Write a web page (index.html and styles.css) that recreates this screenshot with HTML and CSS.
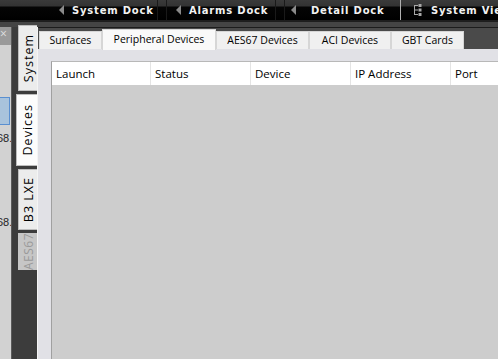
FILE: index.html
```html
<!DOCTYPE html>
<html lang="en">
<head>
    <meta charset="UTF-8">
    <meta name="viewport" content="width=device-width, initial-scale=1.0">
    <title>Peripheral Devices</title>
    <link rel="stylesheet" href="styles.css">
</head>
<body>
    <div class="topbar">
        <div class="dock-spacer"></div>
        <div class="dock-btn dock-system"><span class="arrow"></span>System Dock</div>
        <div class="dock-sep"></div>
        <div class="dock-btn dock-alarms"><span class="arrow"></span>Alarms Dock</div>
        <div class="dock-sep"></div>
        <div class="dock-btn dock-detail"><span class="arrow"></span>Detail Dock</div>
        <div class="dock-sep light"></div>
        <div class="dock-btn dock-view">
            <svg class="tree-icon" width="10" height="12" viewBox="0 0 10 12">
                <path d="M1.5 1 V11 M1.5 1.5 H5 M1.5 6 H5 M1.5 10.5 H5" stroke="#a8a8a8" stroke-width="1" fill="none"/>
                <rect x="5.5" y="0" width="3" height="3" fill="#a8a8a8"/>
                <rect x="5.5" y="4.5" width="3" height="3" fill="#a8a8a8"/>
                <rect x="5.5" y="9" width="3" height="3" fill="#a8a8a8"/>
            </svg>
            System View
        </div>
    </div>
    <div class="topgap"></div>

    <div class="main">
        <div class="side">
            <div class="side-head">×</div>
            <div class="side-item selected"></div>
            <div class="side-text first">68.</div>
            <div class="side-text second">68.</div>
        </div>

        <div class="vtabs">
            <div class="vtab system"><span>System</span></div>
            <div class="vtab devices active"><span>Devices</span></div>
            <div class="vtab b3"><span>B3 LXE</span></div>
            <div class="vtab aes disabled"><span>AES67</span></div>
        </div>

        <div class="content">
            <div class="tabstrip">
                <div class="tab t-surfaces">Surfaces</div>
                <div class="tab t-periph active">Peripheral Devices</div>
                <div class="tab t-aes">AES67 Devices</div>
                <div class="tab t-aci">ACI Devices</div>
                <div class="tab t-gbt">GBT Cards</div>
            </div>
            <div class="page">
                <div class="grid">
                    <div class="grid-head">
                        <div class="col c-launch">Launch</div>
                        <div class="col c-status">Status</div>
                        <div class="col c-device">Device</div>
                        <div class="col c-ip">IP Address</div>
                        <div class="col c-port">Port</div>
                    </div>
                    <div class="grid-body"></div>
                </div>
            </div>
        </div>
    </div>
</body>
</html>
```

FILE: styles.css
```css
body {
    margin: 0;
    padding: 0;
    width: 498px;
    height: 359px;
    overflow: hidden;
    background-color: #444;
    font-family: "Open Sans", "Noto Sans", sans-serif;
}

/* top dock toolbar */
.topbar {
    height: 20px;
    display: flex;
    background: linear-gradient(to bottom, #3a3a3a 0, #333 6px, #050505 7px, #000 100%);
    border-bottom: 2px solid #1e1e1e;
}

.dock-spacer {
    width: 50px;
    flex: none;
}

.dock-btn {
    display: flex;
    align-items: center;
    flex: none;
    padding-left: 9px;
    box-sizing: border-box;
    color: #f2f2f2;
    font-family: "DejaVu Sans", sans-serif;
    font-weight: bold;
    font-size: 10px;
    letter-spacing: 0.8px;
    white-space: nowrap;
}

.dock-btn .arrow {
    width: 0;
    height: 0;
    border-top: 5px solid transparent;
    border-bottom: 5px solid transparent;
    border-right: 5px solid #8a8a8a;
    margin-right: 8px;
}

.dock-system { width: 107px; }
.dock-alarms { width: 108px; }
.dock-detail { width: 113px; padding-left: 6px; }
.dock-detail .arrow { margin-right: 15px; }
.dock-view { padding-left: 8px; }

.tree-icon {
    margin-right: 8px;
}

.dock-sep {
    width: 10px;
    flex: none;
    background: linear-gradient(to right, #1a1a1a 0, #1a1a1a 1px, transparent 1px, transparent 9px, #1a1a1a 9px);
}

.dock-sep.light {
    width: 7px;
    background: linear-gradient(to right, transparent 2px, #b0b0b0 2px, #b0b0b0 3px, transparent 3px);
}

.topgap {
    height: 5px;
    background-color: #454545;
}

/* main area */
.main {
    display: flex;
    height: 332px;
}

.side {
    width: 11px;
    flex: none;
    background-color: #d2d2d2;
    border-right: 1px solid #5a5a5a;
    display: flex;
    flex-direction: column;
    overflow: hidden;
}

.side-head {
    height: 18px;
    background-color: #9a9a9a;
    color: #e0e0e0;
    font-size: 12px;
    line-height: 14px;
    text-indent: 0;
}

.side-item.selected {
    margin-top: 52px;
    height: 26px;
    background-color: #a9c3dc;
    border: 1px solid #5a8fd0;
    border-left: none;
    width: 9px;
}

.side-text {
    font-family: "Liberation Sans", sans-serif;
    font-size: 11px;
    color: #222;
    text-indent: -3px;
    white-space: nowrap;
}

.side-text.first { margin-top: 7px; }
.side-text.second { margin-top: 72px; }

/* vertical tabs */
.vtabs {
    width: 25px;
    flex: none;
    background-color: #3c3c3c;
    display: flex;
    flex-direction: column;
    align-items: flex-end;
    gap: 3px;
    border-right: 1px solid #f4f4f4;
}

.vtab {
    width: 19px;
    background-color: #ececec;
    border: 1px solid #bdbdbd;
    border-right: none;
    box-sizing: border-box;
    display: flex;
    align-items: center;
    justify-content: center;
    font-size: 12.5px;
    color: #000;
}

.vtab span {
    writing-mode: vertical-rl;
    transform: rotate(180deg);
    white-space: nowrap;
    letter-spacing: 1px;
}

.vtab.system { height: 66px; margin-top: -2px; }
.vtab.devices { height: 72px; }
.vtab.b3 { height: 61px; }
.vtab.aes { height: 37px; font-size: 12px; letter-spacing: 0; }
.vtab.aes span { letter-spacing: 0.5px; }

.vtab.active {
    width: 21px;
    background-color: #fcfcfc;
}

.vtab.disabled {
    background-color: #c6c6c6;
    border-color: #c6c6c6;
    color: #9a9a9a;
}

/* horizontal tabs */
.content {
    flex: 1;
    display: flex;
    flex-direction: column;
    min-width: 0;
}

.tabstrip {
    height: 21px;
    flex: none;
    display: flex;
    align-items: flex-end;
    padding-left: 1px;
    background-color: #4a4a4a;
    border-top: 1px solid #1c1c1c;
}

.tab {
    height: 18px;
    box-sizing: border-box;
    background-color: #f0f0f0;
    border: 1px solid #d6d6d6;
    border-bottom: none;
    font-size: 10.5px;
    line-height: 17px;
    color: #000;
    text-align: center;
    white-space: nowrap;
}

.tab.active {
    height: 21px;
    background-color: #f9f9f9;
    margin-bottom: -1px;
    line-height: 18px;
    position: relative;
}

.t-surfaces { width: 63px; }
.t-periph { width: 114px; }
.t-aes { width: 93px; }
.t-aci { width: 82px; }
.t-gbt { width: 73px; }

.page {
    flex: 1;
    background-color: #e1e1e6;
    padding: 12px 0 0 13px;
    display: flex;
    min-height: 0;
}

.grid {
    flex: 1;
    display: flex;
    flex-direction: column;
    border-left: 1px solid #a0a0a0;
    border-top: 1px solid #b8b8b8;
}

.grid-head {
    height: 23px;
    display: flex;
    background-color: #fff;
    flex: none;
}

.col {
    width: 100px;
    flex: none;
    box-sizing: border-box;
    border-right: 1px solid #e4e4e4;
    padding-left: 4px;
    font-size: 11.5px;
    line-height: 23px;
    color: #000;
}

.c-launch { width: 99px; }
.c-port { border-right: none; }

.grid-body {
    flex: 1;
    background-color: #cdcdcd;
}
```
